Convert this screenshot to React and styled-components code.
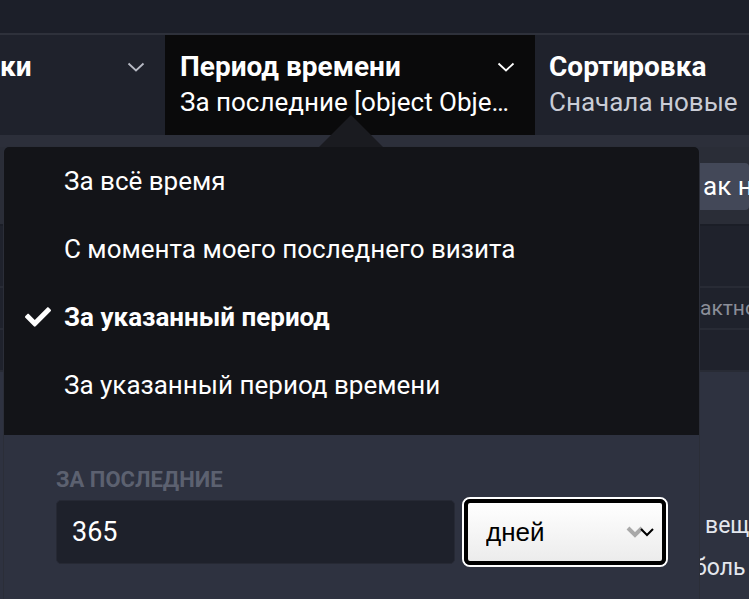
import React from 'react';
import styled, { createGlobalStyle } from 'styled-components';
import { FaCheck } from 'react-icons/fa';

const GlobalStyle = createGlobalStyle`
  body {
    margin: 0;
    background: #1c1f29;
    font-family: Roboto, "Noto Sans", sans-serif;
    overflow: hidden;
  }
`;

const Page = styled.div`
  width: 749px;
  height: 599px;
  overflow: hidden;
  display: flex;
  flex-direction: column;
`;

const TopBar = styled.div`
  height: 33px;
  background: #1c1f29;
  border-bottom: 2px solid #2e313b;
`;

const FilterBar = styled.div`
  display: flex;
  height: 100px;
  background: #1f222c;
`;

const Tab = styled.div`
  width: ${p => p.$width};
  flex: ${p => (p.$grow ? 1 : 'none')};
  min-width: 0;
  background: ${p => (p.$active ? '#0a0a0b' : '#1f222c')};
  padding: 16px ${p => p.$right} 0 ${p => p.$left};
  box-sizing: border-box;
  color: #fff;
`;

const TabHead = styled.div`
  display: flex;
  align-items: center;
  justify-content: space-between;
  height: 32px;
  margin-bottom: 3px;
`;

const TabTitle = styled.div`
  font-size: 28px;
  font-weight: 700;
  line-height: 32px;
  white-space: nowrap;
`;

const TabValue = styled.div`
  font-size: 26px;
  line-height: 32px;
  white-space: nowrap;
  overflow: hidden;
  text-overflow: ellipsis;
  color: ${p => (p.$muted ? '#c9ccd6' : '#fff')};
`;

const Strip = styled.div`
  height: 12px;
  background: #2c2f3a;
`;

const Content = styled.div`
  position: relative;
  flex: 1;
  display: flex;
  flex-direction: column;
  background: #2e3240;
`;

const ToolRow = styled.div`
  height: 79px;
  background: #2a2d37;
  border-bottom: 2px solid #1b1e27;
  padding-top: 16px;
  padding-left: 660px;
  box-sizing: border-box;
`;

const GhostButton = styled.div`
  height: 47px;
  background: #434858;
  border-radius: 4px;
  color: #fff;
  font-size: 26px;
  line-height: 47px;
  white-space: nowrap;
  padding-left: 43px;
`;

const ListRow = styled.div`
  height: ${p => p.$h}px;
  background: #1f222c;
  border-bottom: 2px solid #282b35;
  padding-left: 700px;
  color: #8b8e98;
  font-size: 21px;
  line-height: ${p => p.$h}px;
  white-space: nowrap;
`;

const BodyText = styled.div`
  padding-left: ${p => p.$indent}px;
  color: #e4e7ee;
  font-size: 23px;
  line-height: 42px;
  white-space: nowrap;
`;

const BodyBlock = styled.div`
  padding-top: 133px;
`;

const Popup = styled.div`
  position: absolute;
  top: -1px;
  left: 3px;
  width: 695px;
  bottom: -10px;
  background: #2e3240;
  border: 1px solid #2b2e38;
  border-radius: 5px 5px 0 0;
  z-index: 2;
  display: flex;
  flex-direction: column;
`;

const Arrow = styled.div`
  position: absolute;
  top: -32px;
  left: 315px;
  width: 0;
  height: 0;
  border-left: 32px solid transparent;
  border-right: 32px solid transparent;
  border-bottom: 32px solid #1a1b20;
`;

const List = styled.div`
  background: #131418;
  padding: 0 0 16px;
  border-radius: 5px 5px 0 0;
`;

const Item = styled.div`
  height: 68px;
  display: flex;
  align-items: center;
  gap: 13px;
  padding-left: 20px;
  color: #fff;
  font-size: 26px;
  font-weight: ${p => (p.$selected ? 700 : 400)};
`;

const CheckSlot = styled.span`
  width: 27px;
  display: flex;
  align-items: center;
  justify-content: center;
  color: #fff;
`;

const Footer = styled.div`
  padding: 32px 0 0 52px;
`;

const Label = styled.div`
  font-size: 22px;
  font-weight: 700;
  color: #5c6170;
  text-transform: uppercase;
  line-height: 26px;
  margin-bottom: 4px;
`;

const FieldRow = styled.div`
  display: flex;
  align-items: center;
  gap: 7px;
`;

const NumberInput = styled.input`
  width: 399px;
  height: 64px;
  box-sizing: border-box;
  background: #1e212b;
  border: 1px solid #262934;
  border-radius: 5px;
  color: #fff;
  font-family: Roboto, sans-serif;
  font-size: 27px;
  padding: 0 15px;
  outline: none;
`;

const SelectWrap = styled.div`
  position: relative;
  width: 206px;
  height: 70px;
  box-sizing: border-box;
  border: 2px solid #fff;
  border-radius: 8px;
`;

const Select = styled.select`
  appearance: none;
  width: 100%;
  height: 100%;
  box-sizing: border-box;
  border: 4px solid #000;
  border-radius: 6px;
  background: linear-gradient(#ffffff, #ececec);
  color: #000;
  font-family: "Liberation Sans", Arial, sans-serif;
  font-size: 26px;
  padding: 0 0 0 18px;
  outline: none;
`;

const SelectIcon = styled.svg`
  position: absolute;
  right: 8px;
  top: 26px;
  pointer-events: none;
`;

const Chevron = ({ color }) => (
  <svg width="18" height="10" viewBox="0 0 18 10">
    <path d="M1.5 1.5 L9 8.5 L16.5 1.5" fill="none" stroke={color} strokeWidth="1.8" />
  </svg>
);

const items = [
  'За всё время',
  'С момента моего последнего визита',
  'За указанный период',
  'За указанный период времени',
];

export default function App() {
  return (
    <Page>
      <GlobalStyle />
      <TopBar />
      <FilterBar>
        <Tab $width="165px" $left="0" $right="20px">
          <TabHead>
            <TabTitle>ки</TabTitle>
            <Chevron color="#b7bac4" />
          </TabHead>
        </Tab>
        <Tab $width="370px" $left="15px" $right="20px" $active>
          <TabHead>
            <TabTitle>Период времени</TabTitle>
            <Chevron color="#fff" />
          </TabHead>
          <TabValue>За последние [object Object]</TabValue>
        </Tab>
        <Tab $grow $left="14px" $right="0">
          <TabHead>
            <TabTitle>Сортировка</TabTitle>
          </TabHead>
          <TabValue $muted>Сначала новые</TabValue>
        </Tab>
      </FilterBar>
      <Strip />
      <Content>
        <ToolRow>
          <GhostButton>ак не</GhostButton>
        </ToolRow>
        <ListRow $h={60} />
        <ListRow $h={40}>актно</ListRow>
        <ListRow $h={40} />
        <BodyBlock>
          <BodyText $indent={705}>вещ</BodyText>
          <BodyText $indent={694}>боль</BodyText>
        </BodyBlock>

        <Popup>
          <Arrow />
          <List>
            {items.map((text, i) => (
              <Item key={text} $selected={i === 2}>
                <CheckSlot>{i === 2 && <FaCheck size={26} />}</CheckSlot>
                {text}
              </Item>
            ))}
          </List>
          <Footer>
            <Label>За последние</Label>
            <FieldRow>
              <NumberInput type="text" defaultValue="365" />
              <SelectWrap>
                <Select defaultValue="days">
                  <option value="days">дней</option>
                  <option value="weeks">недель</option>
                  <option value="months">месяцев</option>
                </Select>
                <SelectIcon width="32" height="14" viewBox="0 0 32 14">
                  <path d="M2 3 L9 10 L16 3" fill="none" stroke="#a9a9a9" strokeWidth="4" />
                  <path d="M15 4 L21 10 L27 4" fill="none" stroke="#000" strokeWidth="2" />
                </SelectIcon>
              </SelectWrap>
            </FieldRow>
          </Footer>
        </Popup>
      </Content>
    </Page>
  );
}
